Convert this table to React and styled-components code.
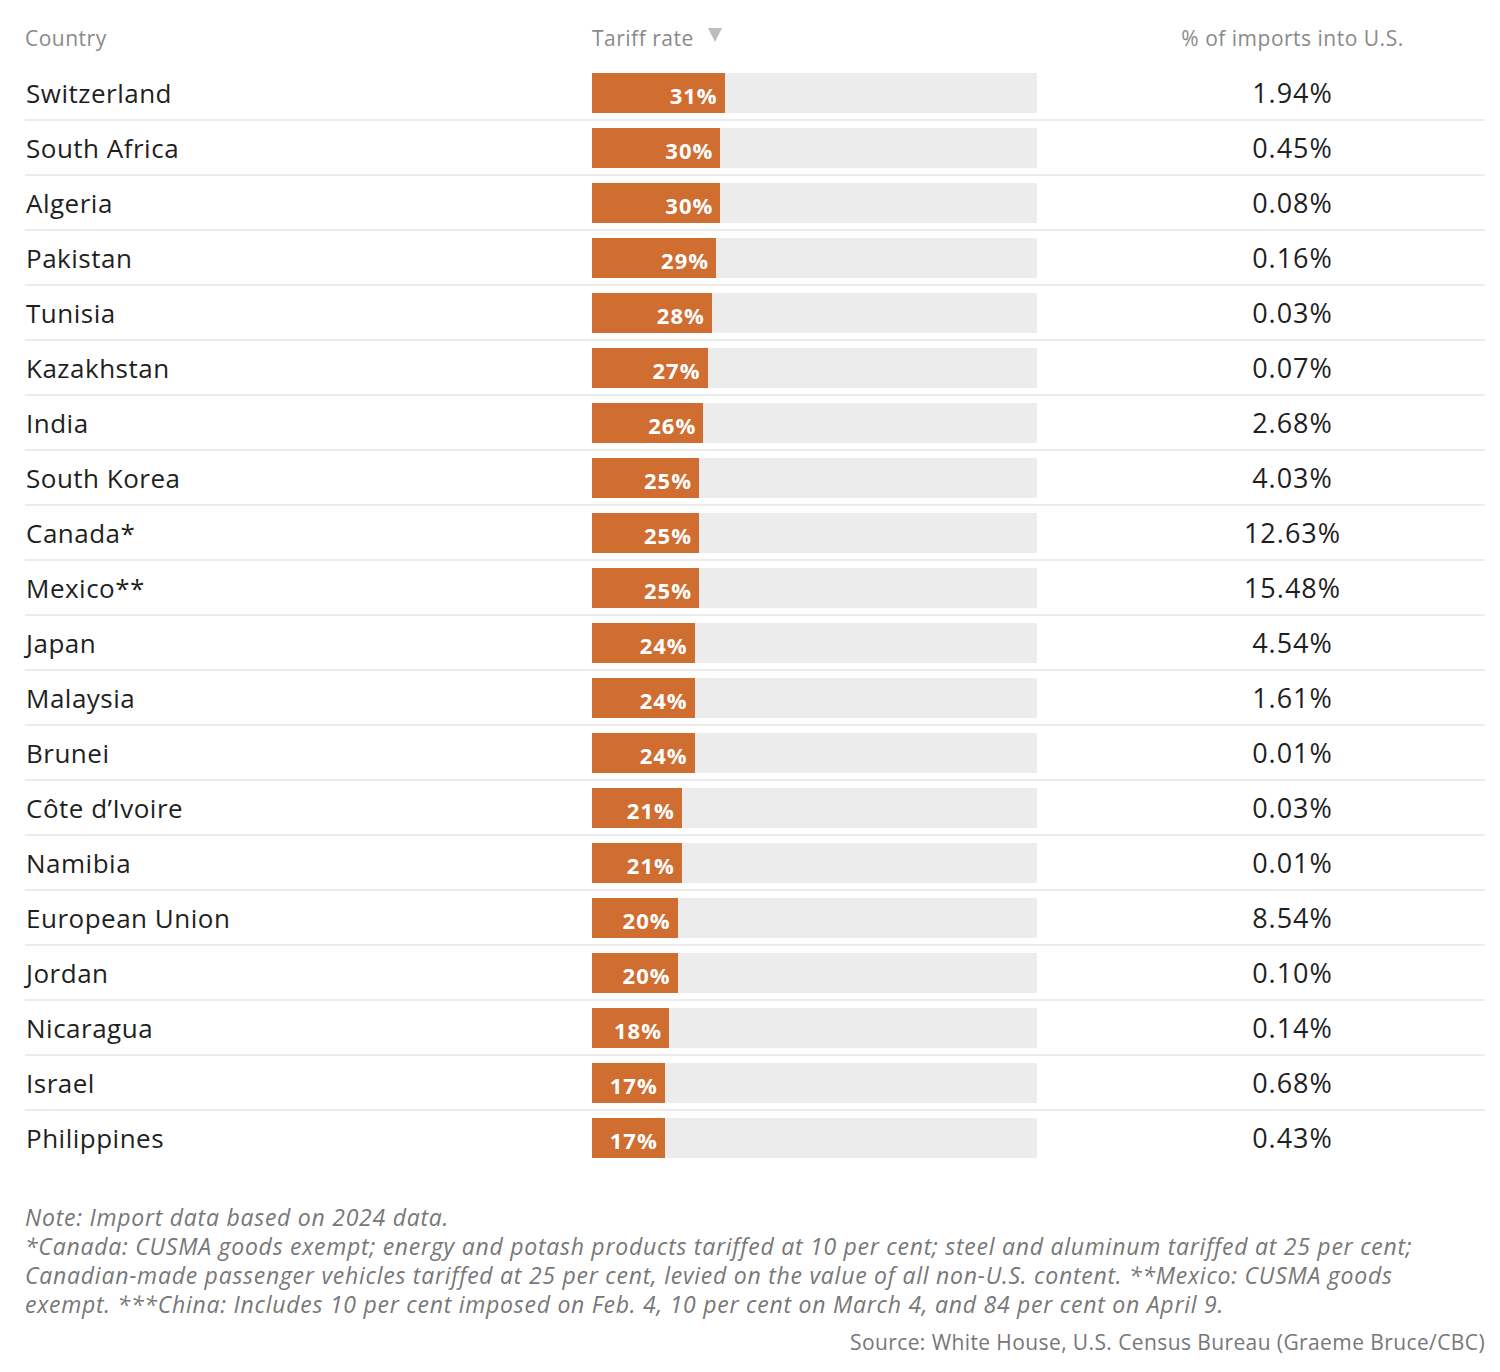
import React from 'react';
import styled, {createGlobalStyle} from 'styled-components';

const GlobalStyle = createGlobalStyle`
    body {
        margin: 0;
        background: #ffffff;
        font-family: "Open Sans", "Noto Sans", sans-serif;
        color: #222222;
    }
`;

const MAX_RATE = 104;

const rows = [
    {country: 'Switzerland', rate: 31, share: '1.94%'},
    {country: 'South Africa', rate: 30, share: '0.45%'},
    {country: 'Algeria', rate: 30, share: '0.08%'},
    {country: 'Pakistan', rate: 29, share: '0.16%'},
    {country: 'Tunisia', rate: 28, share: '0.03%'},
    {country: 'Kazakhstan', rate: 27, share: '0.07%'},
    {country: 'India', rate: 26, share: '2.68%'},
    {country: 'South Korea', rate: 25, share: '4.03%'},
    {country: 'Canada*', rate: 25, share: '12.63%'},
    {country: 'Mexico**', rate: 25, share: '15.48%'},
    {country: 'Japan', rate: 24, share: '4.54%'},
    {country: 'Malaysia', rate: 24, share: '1.61%'},
    {country: 'Brunei', rate: 24, share: '0.01%'},
    {country: 'Côte d’Ivoire', rate: 21, share: '0.03%'},
    {country: 'Namibia', rate: 21, share: '0.01%'},
    {country: 'European Union', rate: 20, share: '8.54%'},
    {country: 'Jordan', rate: 20, share: '0.10%'},
    {country: 'Nicaragua', rate: 18, share: '0.14%'},
    {country: 'Israel', rate: 17, share: '0.68%'},
    {country: 'Philippines', rate: 17, share: '0.43%'},
];

const Wrapper = styled.div`
    padding: 0 15px 0 25px;
    width: 1460px;
`;

const Grid = `
    display: grid;
    grid-template-columns: 567px 445px 1fr;
    align-items: center;
`;

const HeaderRow = styled.div`
    ${Grid};
    height: 66px;
    padding-top: 10px;
    box-sizing: border-box;
`;

const HeaderCell = styled.div`
    font-size: 21px;
    letter-spacing: 0.5px;
    color: #8a8a8a;
    display: flex;
    align-items: center;
    gap: 14px;
    justify-content: ${props => props.center ? 'center' : 'flex-start'};
    padding-left: ${props => props.center ? '63px' : '0'};
`;

const SortArrow = styled.span`
    width: 0;
    height: 0;
    border-left: 7px solid transparent;
    border-right: 7px solid transparent;
    border-top: 14px solid #bdbdbd;
    margin-top: -6px;
`;

const Body = styled.div`
    display: flex;
    flex-direction: column;
`;

const Row = styled.div`
    ${Grid};
    height: 55px;
    box-sizing: border-box;
    border-bottom: 2px solid #ececec;

    &:last-child {
        border-bottom: none;
        height: 53px;
    }
`;

const Country = styled.div`
    font-size: 26px;
    font-weight: 500;
    letter-spacing: 0.5px;
    color: #1f1f1f;
    padding-left: 1px;
`;

const Track = styled.div`
    height: 40px;
    background: #ececec;
    display: flex;
`;

const Fill = styled.div`
    height: 100%;
    background: #d06d31;
    color: #fff;
    font-weight: 700;
    font-size: 22px;
    letter-spacing: 1px;
    display: flex;
    align-items: center;
    justify-content: flex-end;
    padding-right: 7px;
    padding-top: 4px;
    box-sizing: border-box;
    white-space: nowrap;
`;

const Share = styled.div`
    font-size: 27px;
    font-weight: 500;
    letter-spacing: 1px;
    text-align: center;
    padding-left: 63px;
    color: #1f1f1f;
`;

const Notes = styled.div`
    margin-top: 39px;
    font-style: italic;
    font-size: 23px;
    line-height: 29px;
    color: #777;
    letter-spacing: 0.75px;
`;

const NoteLine = styled.div`
    white-space: nowrap;
`;

const Source = styled.div`
    margin-top: 9px;
    text-align: right;
    font-size: 21px;
    color: #777;
    letter-spacing: 0.4px;
`;

export default function App() {
    return (
        <Wrapper>
            <GlobalStyle/>
            <HeaderRow>
                <HeaderCell>Country</HeaderCell>
                <HeaderCell>Tariff rate <SortArrow/></HeaderCell>
                <HeaderCell center>% of imports into U.S.</HeaderCell>
            </HeaderRow>
            <Body>
                {rows.map(r => (
                    <Row key={r.country}>
                        <Country>{r.country}</Country>
                        <Track>
                            <Fill style={{width: `${(r.rate / MAX_RATE) * 100}%`}}>{r.rate}%</Fill>
                        </Track>
                        <Share>{r.share}</Share>
                    </Row>
                ))}
            </Body>
            <Notes>
                <NoteLine>Note: Import data based on 2024 data.</NoteLine>
                <NoteLine>*Canada: CUSMA goods exempt; energy and potash products tariffed at 10 per cent; steel and aluminum tariffed at 25 per cent;</NoteLine>
                <NoteLine>Canadian-made passenger vehicles tariffed at 25 per cent, levied on the value of all non-U.S. content. **Mexico: CUSMA goods</NoteLine>
                <NoteLine>exempt. ***China: Includes 10 per cent imposed on Feb. 4, 10 per cent on March 4, and 84 per cent on April 9.</NoteLine>
            </Notes>
            <Source>Source: White House, U.S. Census Bureau (Graeme Bruce/CBC)</Source>
        </Wrapper>
    );
}
